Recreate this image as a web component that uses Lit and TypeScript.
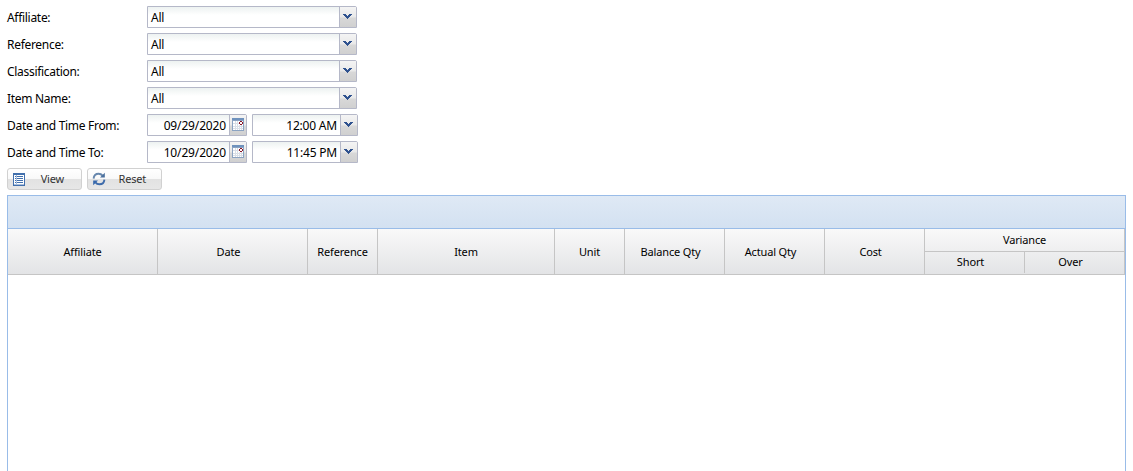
import { LitElement, html, css } from "lit";
import { customElement } from "lit/decorators.js";
import { classMap } from "lit/directives/class-map.js";

const arrow = html`<svg width="9" height="5" viewBox="0 0 9 5" shape-rendering="crispEdges">
  <path fill="#2f528f" d="M0 0h3v1h1v1h1v-1h1v-1h3v1h-1v1h-1v1h-1v1h-1v1h-1v-1h-1v-1h-1v-1h-1v-1h-1z"/>
</svg>`;

const calendar = html`<svg width="12" height="13" viewBox="0 0 12 13" shape-rendering="crispEdges">
  <rect width="12" height="13" fill="#8ba3c2"/>
  <rect width="12" height="2" fill="#6f92bd"/>
  <rect x="1" y="3" width="10" height="9" fill="#fff"/>
  <path fill="#d9dfe7" d="M3 3h1v9h-1zM5 3h1v9h-1zM7 3h1v9h-1zM9 3h1v9h-1zM1 5h10v1h-10zM1 8h10v1h-10zM1 10h10v1h-10z"/>
  <rect x="7" y="3" width="4" height="4" fill="#fff"/>
  <path fill="#8c1423" d="M8 3h2v1h1v2h-1v1h-2v-1h-1v-2h1z"/>
  <rect x="8" y="4" width="2" height="2" fill="#fff"/>
</svg>`;

const listIcon = html`<svg width="12" height="13" viewBox="0 0 12 13" shape-rendering="crispEdges">
  <rect width="12" height="13" fill="#4270ad"/>
  <rect x="1" y="2" width="10" height="10" fill="#fff"/>
  <path fill="#4270ad" d="M2 3h1v1h-1zM2 5h1v1h-1zM2 7h1v1h-1zM2 9h1v1h-1zM4 3h6v1h-6zM4 5h6v1h-6zM4 7h6v1h-6zM4 9h6v1h-6z"/>
  <path fill="#a9bfdd" d="M3 2h1v10h-1zM1 11h10v1h-10z"/>
</svg>`;

const refreshIcon = html`<svg width="14" height="14" viewBox="0 0 14 14">
  <path d="M1.6 6.6C1.9 3.2 4 1.7 6.6 1.7c1.8 0 3 .7 4 2" fill="none" stroke="#6787ad" stroke-width="1.9"/>
  <path d="M12.8 .8v4.800H8z" fill="#4a6f9d"/>
  <path d="M12.4 7.6c-.3 3.3-2.4 4.700-5 4.700-1.800 0-3-.7-4-2" fill="none" stroke="#3f6cab" stroke-width="1.9"/>
  <path d="M1.200 13.200V8.400H6z" fill="#3567ac"/>
</svg>`;

@customElement("app-root")
export class AppRoot extends LitElement {
  static styles = css`
    :host {
      display: flex;
      flex-direction: column;
      box-sizing: border-box;
      height: 471px;
      padding: 6px 7px 0;
      overflow: hidden;
      background: #fff;
      color: #000;
      font: 12px/24px "Noto Sans", sans-serif;
    }
    svg { display: block; }
    .form { display: grid; row-gap: 5px; }
    .row { display: flex; height: 22px; }
    .label { width: 140px; letter-spacing: -0.3px; white-space: nowrap; }
    .field {
      display: flex;
      box-sizing: border-box;
      width: 210px;
      height: 22px;
      border: 1px solid #b5b8c8;
      border-top-right-radius: 2px;
      background: linear-gradient(#edf2f1, #fff 8px);
      line-height: 22px;
      letter-spacing: -0.2px;
    }
    .field.date { width: 100px; margin-right: 5px; letter-spacing: -0.15px; }
    .field.time { width: 106px; }
    .value { flex: 1; padding: 0 3px; white-space: nowrap; }
    .trigger {
      flex: none;
      box-sizing: border-box;
      width: 17px;
      padding: 7px 0 0 3px;
      border-left: 1px solid #b5b8c8;
      background: linear-gradient(#f4f4f4, #e9e9e9 50%, #d8d8d8 55%, #d0d0d0);
    }
    .date .value, .time .value { padding-right: 3px; text-align: right; }
    .trigger.cal { padding: 3px 0 0 2px; }
    .buttons { display: flex; gap: 5px; margin-top: 5px; }
    .button {
      display: flex;
      align-items: center;
      box-sizing: border-box;
      width: 75px;
      height: 22px;
      padding: 0 17px 0 5px;
      border: 1px solid #d1d1d1;
      border-radius: 3px;
      background: linear-gradient(#fff, #f9f9f9 48%, #e2e2e2 52%, #e7e7e7);
      color: #333;
      font: 11px/20px "Noto Sans", sans-serif;
      letter-spacing: -0.2px;
    }
    .button span { margin-left: auto; }
    .button.reset { padding-right: 15px; padding-left: 4px; }
    .panel {
      flex: 1;
      display: flex;
      flex-direction: column;
      box-sizing: border-box;
      width: 1119px;
      margin-top: 5px;
      border: 1px solid #99bce8;
      border-bottom: 0;
    }
    .toolbar {
      height: 32px;
      border-bottom: 1px solid #99bce8;
      background: linear-gradient(#dfe9f5, #d3e1f1);
    }
    .head {
      display: grid;
      grid-template-columns: 150px 150px 70px 177px 70px 100px 100px 100px 200px;
      height: 45px;
      border-bottom: 1px solid #c5c5c5;
      background: linear-gradient(#f9f9f9, #e3e4e6);
      font-size: 11px;
      letter-spacing: -0.15px;
      text-align: center;
      white-space: nowrap;
    }
    .cell {
      box-sizing: border-box;
      border-right: 1px solid #c5c5c5;
      line-height: 46px;
    }
    .sortable { padding-right: 8px; }
    .group { display: grid; grid-template-rows: 23px 22px; line-height: 22px; }
    .title { border-bottom: 1px solid #c5c5c5; }
    .subs { display: grid; grid-template-columns: 100px 99px; line-height: 20px; }
    .sub { box-sizing: border-box; height: 21px; padding-right: 8px; }
    .sub:first-child { border-right: 1px solid #c5c5c5; }
  `;

  private filters = ["Affiliate:", "Reference:", "Classification:", "Item Name:"];
  private ranges = [
    ["Date and Time From:", "09/29/2020", "12:00 AM"],
    ["Date and Time To:", "10/29/2020", "11:45 PM"],
  ];
  private columns = [
    { name: "Affiliate", sortable: false },
    { name: "Date", sortable: true },
    { name: "Reference", sortable: false },
    { name: "Item", sortable: false },
    { name: "Unit", sortable: false },
    { name: "Balance Qty", sortable: true },
    { name: "Actual Qty", sortable: true },
    { name: "Cost", sortable: true },
  ];

  render() {
    return html`
      <div class="form">
        ${this.filters.map((f) => html`<div class="row">
          <div class="label">${f}</div>
          <div class="field"><div class="value">All</div><div class="trigger">${arrow}</div></div>
        </div>`)}
        ${this.ranges.map(([label, date, time]) => html`<div class="row">
          <div class="label">${label}</div>
          <div class="field date"><div class="value">${date}</div><div class="trigger cal">${calendar}</div></div>
          <div class="field time"><div class="value">${time}</div><div class="trigger">${arrow}</div></div>
        </div>`)}
      </div>
      <div class="buttons">
        <div class="button">${listIcon}<span>View</span></div>
        <div class="button reset">${refreshIcon}<span>Reset</span></div>
      </div>
      <div class="panel">
        <div class="toolbar"></div>
        <div class="head">
          ${this.columns.map((c) => html`<div class=${classMap({ cell: true, sortable: c.sortable })}>${c.name}</div>`)}
          <div class="cell group">
            <div class="title">Variance</div>
            <div class="subs"><div class="sub">Short</div><div class="sub">Over</div></div>
          </div>
        </div>
      </div>
    `;
  }
}
